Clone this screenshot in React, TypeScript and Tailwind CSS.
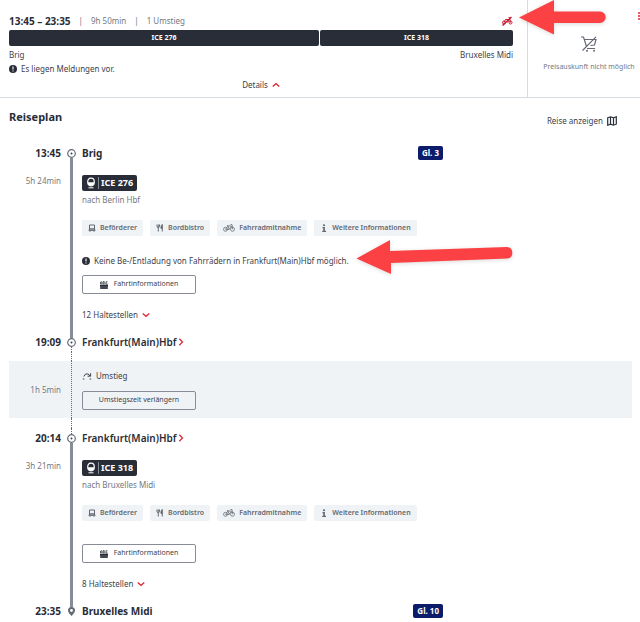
import type { ReactNode } from "react";

const amenities = [
  { name: "Beförderer", icon: "bus" },
  { name: "Bordbistro", icon: "bistro" },
  { name: "Fahrradmitnahme", icon: "bike" },
  { name: "Weitere Informationen", icon: "info" },
];

const Icon = ({ name }: { name: string }) => {
  if (name === "bus") {
    return (
      <svg className="w-2 h-2" viewBox="0 0 16 16" fill="none" stroke="currentColor" strokeWidth="2">
        <path d="M3 2h10v10H3zM3 9.500h10M1 12.500h14M4 13v2.500M12 13v2.500" />
      </svg>
    );
  }
  if (name === "bistro") {
    return (
      <svg className="w-2 h-2" viewBox="0 0 16 16" fill="none" stroke="currentColor" strokeWidth="2">
        <path d="M2 1v4q0 2 2.500 2T7 5V1M4.500 1v14" />
        <path d="M12.500 15V1q-2.500 2-2.500 5v3h2.500" fill="currentColor" />
      </svg>
    );
  }
  if (name === "bike") {
    return (
      <svg className="w-3 h-2" viewBox="0 0 24 16" fill="none" stroke="currentColor" strokeWidth="1.500">
        <circle cx="5" cy="10.500" r="4" />
        <circle cx="19" cy="10.500" r="4" />
        <path d="M5 10.500 10 4h7l-5 7H5M10 4l2.500 7M15 1h3l1.500 9.500M8 3h3" />
      </svg>
    );
  }
  return (
    <svg className="w-2 h-2" viewBox="0 0 16 16" fill="currentColor">
      <circle cx="8" cy="2.500" r="2.200" />
      <path d="M5 6h4.800v7.500H12V16H4.500v-2.500h2V8.300H5z" />
    </svg>
  );
};

const Alert = () => (
  <svg className="w-2 h-2 shrink-0" viewBox="0 0 16 16">
    <circle cx="8" cy="8" r="8" fill="#282d37" />
    <path d="M8 3v6M8 11v2.200" stroke="white" strokeWidth="2.200" />
  </svg>
);

const Chevron = ({ direction }: { direction: "up" | "down" | "right" }) => (
  <svg
    className={direction === "right" ? "w-1.5 h-2" : "w-2 h-1.5"}
    viewBox={direction === "right" ? "0 0 6 8" : "0 0 8 6"}
    fill="none"
    stroke="#e02a38"
    strokeWidth="1.300"
  >
    {direction === "up" && <path d="M.7 4.600 4 1.700l3.300 2.900" />}
    {direction === "down" && <path d="M.7 1.400 4 4.300l3.300-2.900" />}
    {direction === "right" && <path d="M1.300.8 4.500 4 1.300 7.200" />}
  </svg>
);

const Line = ({ type }: { type: "solid" | "dotted" | "none" }) => {
  if (type === "none") return <span className="flex-1" />;
  if (type === "dotted") {
    return <span className="flex-1 border-l border-dotted border-[#646973]" />;
  }
  return <span className="flex-1 w-[3px] bg-[#878c96]" />;
};

type RowProps = {
  left?: ReactNode;
  line: ReactNode;
  className?: string;
  children?: ReactNode;
};

const Row = ({ left, line, className = "", children }: RowProps) => (
  <div className={`grid grid-cols-[52px_21px_minmax(0,1fr)] ${className}`}>
    <div className="text-right">{left}</div>
    <div className="flex flex-col items-center self-stretch">{line}</div>
    <div>{children}</div>
  </div>
);

type StopProps = {
  time: string;
  name: string;
  platform?: string;
  above: "solid" | "dotted" | "none";
  below: "solid" | "dotted" | "none";
  link?: boolean;
};

const Stop = ({ time, name, platform, above, below, link }: StopProps) => (
  <Row
    className="h-5 text-[10px] leading-5 font-semibold text-[#282d37]"
    left={<time className="font-bold">{time}</time>}
    line={
      <>
        <Line type={above} />
        {below === "none" ? (
          <svg className="w-[9px] h-[9px]" viewBox="0 0 9 9">
            <path d="M4.500 9C2.500 6.800 1 5.200 1 3.500a3.500 3.500 0 0 1 7 0C8 5.200 6.500 6.800 4.500 9z" fill="#646973" />
            <circle cx="4.500" cy="3.500" r="1.400" fill="white" />
          </svg>
        ) : (
          <svg className="w-[9px] h-[9px]" viewBox="0 0 9 9">
            <circle cx="4.500" cy="4.500" r="3.800" fill="white" stroke="#646973" strokeWidth="1.200" />
            <circle cx="4.500" cy="4.500" r="1" fill="#3c414b" />
          </svg>
        )}
        <Line type={below} />
      </>
    }
  >
    <div className="flex items-center justify-between max-w-[361px]">
      {link ? (
        <a href="#" className="flex items-center gap-0.5">
          {name}
          <Chevron direction="right" />
        </a>
      ) : (
        <span className="font-bold">{name}</span>
      )}
      {platform && (
        <span className="px-1 rounded-xs bg-[#0c1c6b] text-white text-[8px] leading-[14px] font-bold">{platform}</span>
      )}
    </div>
  </Row>
);

const TripButton = ({ children }: { children: ReactNode }) => (
  <button className="flex items-center justify-center gap-1.5 w-[114px] h-[19px] border border-[#878c96] rounded-xs text-[7px]">
    {children}
  </button>
);

type LegProps = {
  duration: string;
  train: string;
  destination: string;
  message?: string;
  stops: number;
};

const Leg = ({ duration, train, destination, message, stops }: LegProps) => (
  <Row
    left={<p className="pt-2.5 leading-4 text-[#747982]">{duration}</p>}
    line={<Line type="solid" />}
  >
    <div className="pt-3 pb-[9px]">
      <div className="flex items-center w-fit h-4 px-1 gap-0.5 rounded-xs bg-[#282d37] text-white text-[9px] font-bold">
        <svg className="w-2.5 h-3" viewBox="0 0 10 12" fill="none" stroke="white">
          <path d="M5 1.200C2.500 1.200 1.700 2.800 1.700 5S2.500 8.800 5 8.800 8.300 7.200 8.300 5 7.500 1.200 5 1.200z" strokeWidth="1.200" />
          <path d="M2 5.200h6v1.600L6.800 8.500H3.200L2 6.800z" fill="white" stroke="none" />
          <path d="M2.500 10.800h5" />
        </svg>
        <span className="h-3 border-l border-[#878c96]" />
        {train}
      </div>
      <p className="leading-[18px] text-[#747982]">nach {destination}</p>
      <ul className="flex flex-wrap gap-[7px] mt-[11px]">
        {amenities.map((item) => (
          <li
            key={item.name}
            className="flex items-center gap-1 h-4 px-1.5 rounded-xs bg-[#f0f3f5] text-[#646973] text-[7px] font-semibold"
          >
            <Icon name={item.icon} />
            {item.name}
          </li>
        ))}
      </ul>
      <div className={message ? "mt-[17px] mb-1.5" : "mt-[23px]"}>
        {message && (
          <p className="flex items-center gap-1 leading-4">
            <Alert />
            {message}
          </p>
        )}
      </div>
      <TripButton>
        <svg className="w-2 h-2" viewBox="0 0 16 16" fill="none" stroke="#282d37" strokeWidth="1.500">
          <path d="M1 6V2.500l1.500-1.500L4 2.500V6M1 4h3M6.500 1v5h2l1-1-1-1.500 1-1-1-1.500zM15 1.500h-3V6h3" />
          <path d="M0 8h16v3H0zM1 13h14v2H1z" fill="#282d37" />
        </svg>
        Fahrtinformationen
      </TripButton>
      <button className="flex items-center gap-1 mt-[13px] leading-4">
        {stops} Haltestellen
        <Chevron direction="down" />
      </button>
    </div>
  </Row>
);

const App = () => {
  return (
    <div className="relative min-h-screen overflow-hidden bg-white text-[#3c414b] text-[8px] font-['Noto_Sans',sans-serif]">
      <section className="flex border-b border-[#d7dce1]">
        <div className="flex-1 pt-3 pl-[9px] pr-3.5 pb-1 border-r border-[#d7dce1]">
          <div className="flex items-center h-[18px] gap-2 text-[#747982]">
            <strong className="text-[10px] text-[#282d37]">13:45 – 23:35</strong>
            <span>|</span>
            <span>9h 50min</span>
            <span>|</span>
            <span>1 Umstieg</span>
            <svg className="w-3 h-3 ml-auto" viewBox="0 0 24 24" fill="none" stroke="#c81c32" strokeWidth="2">
              <circle cx="6" cy="15" r="3" />
              <circle cx="19" cy="15" r="3" />
              <path d="M6 15 9 9h8l-4 6M15 5h2l2 10" />
              <path d="M3 21 21 4" strokeWidth="2.800" />
            </svg>
          </div>
          <div className="flex gap-px h-4 text-white text-[7px] leading-4 font-bold text-center">
            <div className="grow-[310] basis-0 rounded-xs bg-[#282d37]">ICE 276</div>
            <div className="grow-[193] basis-0 rounded-xs bg-[#282d37]">ICE 318</div>
          </div>
          <div className="flex justify-between leading-[18px]">
            <span>Brig</span>
            <span>Bruxelles Midi</span>
          </div>
          <p className="flex items-center gap-1 leading-[10px]">
            <Alert />
            Es liegen Meldungen vor.
          </p>
          <button className="flex items-center gap-1 mx-auto mt-[3px] leading-4">
            Details
            <Chevron direction="up" />
          </button>
        </div>
        <div className="flex flex-col items-center w-28 pt-9 pl-2.5 text-[7px] text-[#747982] whitespace-nowrap">
          <svg className="w-4 h-4" viewBox="0 0 16 16" fill="none" stroke="#646973" strokeWidth="1.200">
            <path d="M0 1h2.500l3 9.500M3.500 3.500h11.500l-1.500 5.500-4 .5M1.500 14.500 15 .8M6 12.500h8" />
            <circle cx="6" cy="14.800" r="1" fill="#646973" stroke="none" />
            <circle cx="13" cy="14.800" r="1" fill="#646973" stroke="none" />
          </svg>
          <p className="mt-2.5 leading-[10px]">Preisauskunft nicht möglich</p>
        </div>
      </section>

      <main className="pl-[9px] pr-2">
        <div className="flex items-center justify-between h-[45px] pr-[15px]">
          <h1 className="pb-1.5 text-[11px] font-bold text-[#282d37]">Reiseplan</h1>
          <a href="#" className="flex items-center gap-1">
            Reise anzeigen
            <svg className="w-2.5 h-2.5" viewBox="0 0 10 10" fill="none" stroke="#282d37" strokeWidth="1.200">
              <path d="M.7 1.800 3.500.8l3 1 2.800-1v7.400l-2.800 1-3-1-2.800 1zM3.500.8v7.400M6.500 1.800v7.400" />
            </svg>
          </a>
        </div>

        <div>
          <Stop time="13:45" name="Brig" platform="Gl. 3" above="none" below="solid" />
          <Leg
            duration="5h 24min"
            train="ICE 276"
            destination="Berlin Hbf"
            message="Keine Be-/Entladung von Fahrrädern in Frankfurt(Main)Hbf möglich."
            stops={12}
          />
          <Stop time="19:09" name="Frankfurt(Main)Hbf" above="solid" below="dotted" link />
          <Row className="h-[9px]" line={<Line type="dotted" />} />
          <Row
            className="items-center bg-[#f0f3f5]"
            left={<span className="text-[#747982]">1h 5min</span>}
            line={<Line type="dotted" />}
          >
            <div className="pt-[7px] pb-2">
              <p className="flex items-center gap-1 mb-[7px] leading-4">
                <svg className="w-2.5 h-2.5" viewBox="0 0 10 10" fill="none" stroke="#3c414b">
                  <path d="M1.800 5.500Q3 2.500 5.200 2.800T8 5M5.600 5.200h3V2.300" />
                  <path d="M.8 8h1.500M7.700 8h1.500" />
                </svg>
                Umstieg
              </p>
              <TripButton>Umstiegszeit verlängern</TripButton>
            </div>
          </Row>
          <Row className="h-2.5" line={<Line type="dotted" />} />
          <Stop time="20:14" name="Frankfurt(Main)Hbf" above="dotted" below="solid" link />
          <Leg duration="3h 21min" train="ICE 318" destination="Bruxelles Midi" stops={8} />
          <Stop time="23:35" name="Bruxelles Midi" platform="Gl. 10" above="solid" below="none" />
        </div>
      </main>

      {/* overflow menu, sits on the window edge */}
      <button aria-label="Menü" className="absolute top-3 -right-1">
        <svg className="w-1.5 h-2" viewBox="0 0 6 8" stroke="#e02a38" strokeWidth="1.300">
          <path d="M0 1h6M0 4h6M0 7h6" />
        </svg>
      </button>

      {/* callout arrows */}
      <svg className="absolute top-0 left-[515px] w-[96px] h-[42px] drop-shadow-sm" viewBox="0 0 96 42" fill="#fc4144">
        <path d="M4 17.500 39 0v11.500h46a5.500 5.500 0 0 1 0 11.500H39v11.500z" />
      </svg>
      <svg className="absolute top-[235px] left-[350px] w-[170px] h-[45px] drop-shadow-sm" viewBox="0 0 170 45" fill="#fc4144">
        <path d="M6.500 23.500 40 5v11l117-4a5.800 5.800 0 0 1 .5 11.500L41 28v11z" />
      </svg>
    </div>
  );
};

export default App;
